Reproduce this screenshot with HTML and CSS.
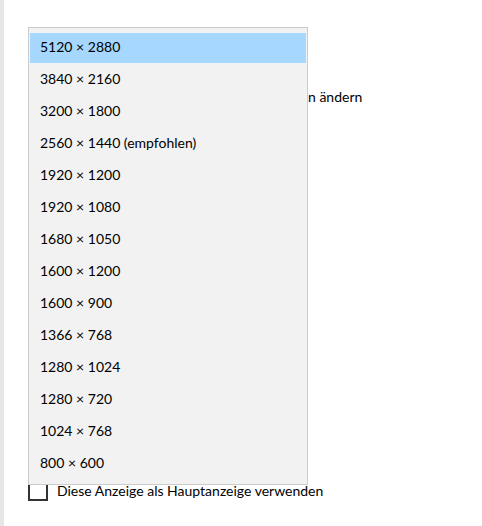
FILE: index.html
```html
<!DOCTYPE html>
<html lang="de">
<head>
	<meta charset="UTF-8">
	<title>Anzeige</title>
	<link rel="stylesheet" href="styles.css">
</head>
<body>
	<div class="page">
		<div class="rail"></div>
		<div class="main">
			<div class="field"></div>
			<p class="line">n ändern</p>
			<div class="spacer"></div>
			<label class="check">
				<span class="box"></span>
				<span>Diese Anzeige als Hauptanzeige verwenden</span>
			</label>

			<ul class="menu">
				<li class="active">5120 × 2880</li>
				<li>3840 × 2160</li>
				<li>3200 × 1800</li>
				<li>2560 × 1440 (empfohlen)</li>
				<li>1920 × 1200</li>
				<li>1920 × 1080</li>
				<li>1680 × 1050</li>
				<li>1600 × 1200</li>
				<li>1600 × 900</li>
				<li>1366 × 768</li>
				<li>1280 × 1024</li>
				<li>1280 × 720</li>
				<li>1024 × 768</li>
				<li>800 × 600</li>
			</ul>
		</div>
	</div>
</body>
</html>
```

FILE: styles.css
```css
* {margin: 0;padding: 0;box-sizing: border-box;}
ul {list-style: none;}
body {background: #fff;color: #000;font: 14px/20px Lato, sans-serif;}
.page {display: flex;height: 526px;}
.rail {width: 4px;background: #e6e6e6;}
.main {position: relative;flex: 1;padding: 27px 0 0 24px;}
.field {height: 60px;}
.line {padding-left: 280px;}
.spacer {height: 374px;}
.check {display: flex;align-items: center;gap: 9px;}
.check .box {width: 20px;height: 20px;border: 2px solid #333;}
.menu {position: absolute;left: 24px;top: 27px;width: 280px;padding: 5px 1px 3px;background: #f2f2f2;border: 1px solid #ccc;}
.menu li {height: 30px;margin-bottom: 2px;padding-left: 10px;line-height: 28px;}
.menu li.active {background: #a6d7fe;}
```
